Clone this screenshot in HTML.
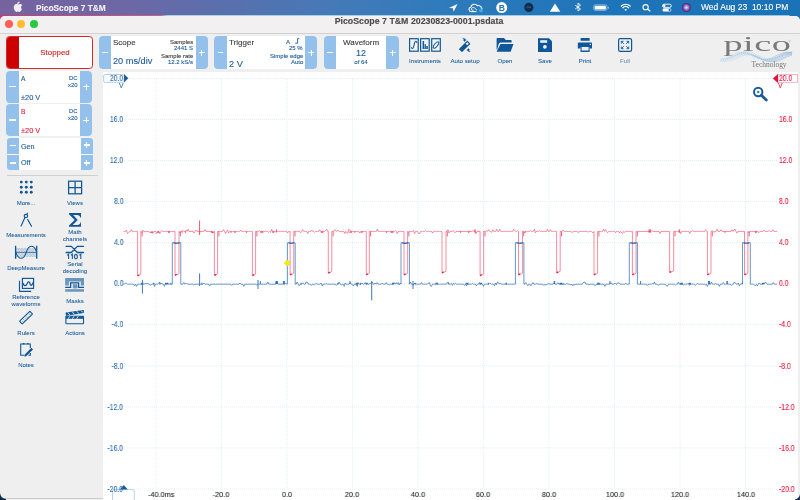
<!DOCTYPE html>
<html><head><meta charset="utf-8">
<style>
*{margin:0;padding:0;box-sizing:border-box}
html,body{width:800px;height:500px;overflow:hidden;background:#142c57;font-family:"Liberation Sans",sans-serif}
.t{position:absolute;white-space:nowrap;will-change:transform;-webkit-text-stroke:0.12px currentColor}
svg{will-change:transform}
.a{position:absolute}
.btn{position:absolute;background:#93c1eb}
.pm{position:absolute;color:#fff;font-size:13px;line-height:13px;font-weight:normal;text-align:center;width:12px}
</style></head><body>
<div class="a" style="left:0;top:0;width:800px;height:20px;background:linear-gradient(90deg,#c73a70 0%,#d05a80 20%,#a8d4e6 21%,#8fc8e0 98.6%,#1b72b6 98.8%)"></div>
<div class="a" style="left:0;top:0;width:800px;height:14.8px;background:linear-gradient(90deg,#75639f 0%,#6c68a5 16%,#5870ae 29%,#4779b7 41%,#2f7bbb 55%,#1e74b8 75%,#1b72b6 100%)"></div>
<div class="a" style="left:0;top:15.5px;width:800px;height:484.5px;background:#efefef;border-radius:5px 5px 0 0;overflow:hidden">
<div class="a" style="left:0;top:0;width:800px;height:17.2px;background:#f3f0f1"></div>
<div class="a" style="left:0;top:17.2px;width:800px;height:1px;background:#d3d0d2"></div>
</div>
<div class="a" style="left:5px;top:498px;width:98px;height:1px;background:#cdcdcd"></div>
<div class="a" style="left:4.80px;top:20.20px;width:7.8px;height:7.8px;border-radius:50%;background:#fe5f57"></div>
<div class="a" style="left:17.10px;top:20.20px;width:7.8px;height:7.8px;border-radius:50%;background:#febc2e"></div>
<div class="a" style="left:29.80px;top:20.20px;width:7.8px;height:7.8px;border-radius:50%;background:#28c840"></div>
<div class="t" style="left:36px;top:3.60px;font-size:8.3px;line-height:8.3px;color:#f4f1f8;font-weight:bold;">PicoScope 7 T&amp;M</div>
<div class="t" style="right:11.700000000000045px;top:2.85px;font-size:8.5px;line-height:8.5px;color:#ffffff;font-weight:normal;">Wed Aug 23&nbsp; 10:10 PM</div>
<svg class="a" style="left:13px;top:0.9px" width="10" height="11" viewBox="0 0 10 11"><path fill="#f2eff7" d="M6.6,0.4 C6.7,1.2 6.3,2 5.8,2.5 C5.3,3 4.7,3.2 4.2,3.2 C4.1,2.4 4.5,1.6 5,1.1 C5.4,0.7 6.1,0.4 6.6,0.4 Z M8.9,8.2 C8.6,8.9 8.4,9.3 8,9.8 C7.5,10.5 6.9,10.9 6.3,10.9 C5.8,10.9 5.6,10.6 4.9,10.6 C4.2,10.6 3.9,10.9 3.4,10.9 C2.8,10.9 2.3,10.3 1.8,9.6 C0.6,7.9 0.4,5.7 1.3,4.4 C1.9,3.5 2.8,3.1 3.6,3.1 C4.4,3.1 4.9,3.5 5.5,3.5 C6.1,3.5 6.5,3.1 7.4,3.1 C8.1,3.1 8.8,3.5 9.3,4.1 C7.6,5 7.9,7.5 8.9,8.2 Z"/></svg>
<svg class="a" style="left:440px;top:0" width="360" height="15" viewBox="440 0 360 15">
<path fill="#fff" d="M457.5,4 L449,8 L453,8.3 L453.6,11.8 Z"/>
<path d="M471.2,11.6 C468.6,11.6 468.2,7.6 470.8,7.2 C471,4.2 475.6,3.2 477.3,5.6 C480.6,5 482.6,8.2 481.6,10.4" fill="none" stroke="#fff" stroke-width="1.1"/>
<path d="M471.2,11.6 L476.5,11.6" stroke="#fff" stroke-width="1.1"/>
<path d="M473.6,10.2 C472.2,10.8 470.8,9.6 471.6,8.3 C472.5,7 474.5,7.5 475.3,8.6 L477,10.2" fill="none" stroke="#fff" stroke-width="0.9"/>
<circle cx="481" cy="10.6" r="2" fill="#3aa8ec"/>
<circle cx="501.7" cy="7.6" r="5.5" fill="#fff"/>
<text x="501.8" y="10.7" font-family="Liberation Sans" font-weight="bold" font-size="8.6" fill="#2a74b5" text-anchor="middle">B</text>
<circle cx="528.8" cy="7.4" r="4.6" fill="#0f2e4e"/>
<path d="M526.5,7.6 L528,6.8 L529.5,7.4 L531,6.9" stroke="#6c8aa8" stroke-width="0.6" fill="none"/>
<path fill="#fff" d="M555,3.4 L560.3,11.8 L549.8,11.8 Z"/>
<path fill="none" stroke="#fff" stroke-width="0.9" d="M575.2,5.2 L580.5,9 L578,11 L578,3 L580.5,5.2 L575.2,9"/>
<rect x="593.5" y="4.8" width="13.5" height="5.6" rx="1.8" fill="none" stroke="#fff" stroke-opacity="0.55" stroke-width="0.8"/>
<rect x="594.6" y="5.8" width="11.3" height="3.6" rx="0.9" fill="#fff"/>
<path d="M607.8,6.5 L608.8,7 L608.8,8.4 L607.8,8.9" fill="#fff" fill-opacity="0.55"/>
<g fill="none" stroke="#fff" stroke-width="1.2" stroke-linecap="round"><path d="M621.3,6 A6.5,6.5 0 0 1 630.2,6"/><path d="M622.9,7.8 A4.2,4.2 0 0 1 628.6,7.8"/></g>
<path fill="#fff" d="M624.4,9.5 A2,2 0 0 1 627.1,9.5 L625.75,11.1 Z"/>
<circle cx="645.6" cy="7.2" r="2.6" fill="none" stroke="#fff" stroke-width="1.1"/>
<path d="M647.5,9.1 L650.3,11.2" stroke="#fff" stroke-width="1.2"/>
<rect x="662.5" y="4.2" width="8.8" height="3.2" rx="1.6" fill="none" stroke="#fff" stroke-width="0.9"/>
<circle cx="664.2" cy="5.8" r="1.2" fill="#fff"/>
<rect x="662.5" y="8.3" width="8.8" height="3.3" rx="1.6" fill="#fff"/>
<circle cx="669.6" cy="9.95" r="1.1" fill="#1a70b6"/>
<defs><radialGradient id="siri" cx="50%" cy="50%" r="50%"><stop offset="0" stop-color="#f4f0ff"/><stop offset="0.3" stop-color="#8ab8f0"/><stop offset="0.6" stop-color="#b050b8"/><stop offset="1" stop-color="#33285e"/></radialGradient></defs>
<circle cx="686.4" cy="7.5" r="4.5" fill="url(#siri)"/>

</svg>
<div class="t" style="left:319.1px;width:200px;text-align:center;top:16.95px;font-size:8.8px;line-height:8.8px;color:#4a4a4a;font-weight:bold;">PicoScope 7 T&amp;M 20230823-0001.psdata</div>
<div class="a" style="left:6px;top:36px;width:86.7px;height:32.6px;border:1px solid #d42a2a;border-radius:3.5px;background:#fff;overflow:hidden"><div class="a" style="left:0;top:0;width:11.8px;height:31px;background:#cc0000"></div></div>
<div class="t" style="left:-44.8px;width:200px;text-align:center;top:48.64px;font-size:7.9px;line-height:7.9px;color:#cc1f1f;font-weight:normal;">Stopped</div>
<div class="a" style="left:6px;top:71px;width:86.4px;height:32px;border-radius:4px;background:#fff;overflow:hidden"><div class="a" style="left:0;top:0;width:13px;height:32px;background:#93c1eb"></div><div class="a" style="right:0;top:0;width:12.4px;height:32px;background:#93c1eb"></div></div>
<div class="a" style="left:9.20px;top:86.00px;width:6.6px;height:1.4px;background:#fff"></div>
<div class="a" style="left:83.05px;top:86.17px;width:6.3px;height:1.25px;background:#fff"></div>
<div class="a" style="left:85.58px;top:83.65px;width:1.25px;height:6.3px;background:#fff"></div>
<div class="t" style="left:20.8px;top:75.98px;font-size:6.6px;line-height:6.6px;color:#1c5b99;font-weight:normal;">A</div>
<div class="t" style="right:722.2px;top:76.02px;font-size:5.9px;line-height:5.9px;color:#1c5b99;font-weight:normal;">DC</div>
<div class="t" style="right:722.2px;top:83.02px;font-size:5.9px;line-height:5.9px;color:#1c5b99;font-weight:normal;">x20</div>
<div class="t" style="left:21px;top:93.79px;font-size:7.4px;line-height:7.4px;color:#1c5b99;font-weight:normal;">±20 V</div>
<div class="a" style="left:6px;top:104.3px;width:86.4px;height:31.8px;border-radius:4px;background:#fff;overflow:hidden"><div class="a" style="left:0;top:0;width:13px;height:31.8px;background:#93c1eb"></div><div class="a" style="right:0;top:0;width:12.4px;height:31.8px;background:#93c1eb"></div></div>
<div class="a" style="left:9.20px;top:119.40px;width:6.6px;height:1.4px;background:#fff"></div>
<div class="a" style="left:83.05px;top:119.58px;width:6.3px;height:1.25px;background:#fff"></div>
<div class="a" style="left:85.58px;top:117.05px;width:1.25px;height:6.3px;background:#fff"></div>
<div class="t" style="left:20.8px;top:109.18px;font-size:6.6px;line-height:6.6px;color:#e01a3c;font-weight:normal;">B</div>
<div class="t" style="right:722.2px;top:109.12px;font-size:5.9px;line-height:5.9px;color:#1c5b99;font-weight:normal;">DC</div>
<div class="t" style="right:722.2px;top:116.02px;font-size:5.9px;line-height:5.9px;color:#1c5b99;font-weight:normal;">x20</div>
<div class="t" style="left:21px;top:126.79px;font-size:7.4px;line-height:7.4px;color:#e01a3c;font-weight:normal;">±20 V</div>
<div class="a" style="left:7px;top:138px;width:85.8px;height:31.7px;border-radius:3px;background:#fff;overflow:hidden"><div class="a" style="left:0;top:0;width:12px;height:15.8px;background:#93c1eb"></div><div class="a" style="right:0;top:0;width:11.8px;height:15.8px;background:#93c1eb"></div><div class="a" style="left:0;top:17px;width:12px;height:15px;background:#93c1eb"></div><div class="a" style="right:0;top:17px;width:11.8px;height:15px;background:#93c1eb"></div></div>
<div class="a" style="left:10.10px;top:144.50px;width:6px;height:1.4px;background:#fff"></div>
<div class="a" style="left:83.80px;top:144.45px;width:6px;height:1.3px;background:#fff"></div>
<div class="a" style="left:86.15px;top:142.10px;width:1.3px;height:6px;background:#fff"></div>
<div class="t" style="left:20.8px;top:143.38px;font-size:7.2px;line-height:7.2px;color:#1c5b99;font-weight:normal;">Gen</div>
<div class="a" style="left:10.10px;top:162.30px;width:6px;height:1.4px;background:#fff"></div>
<div class="a" style="left:83.80px;top:162.35px;width:6px;height:1.3px;background:#fff"></div>
<div class="a" style="left:86.15px;top:160.00px;width:1.3px;height:6px;background:#fff"></div>
<div class="t" style="left:20.8px;top:159.38px;font-size:7.2px;line-height:7.2px;color:#1c5b99;font-weight:normal;">Off</div>
<div class="a" style="left:7px;top:175px;width:91px;height:0.8px;background:#cfcfcf"></div>
<div class="a" style="left:99px;top:36px;width:108.7px;height:32.7px;border-radius:4px;background:#fff;overflow:hidden"><div class="a" style="left:0;top:0;width:11.7px;height:32.7px;background:#93c1eb"></div><div class="a" style="right:0;top:0;width:12px;height:32.7px;background:#93c1eb"></div></div>
<div class="a" style="left:102.25px;top:51.90px;width:5.5px;height:1.2px;background:#fff"></div>
<div class="a" style="left:198.70px;top:51.90px;width:6px;height:1.2px;background:#fff"></div>
<div class="a" style="left:201.10px;top:49.50px;width:1.2px;height:6px;background:#fff"></div>
<div class="t" style="left:112.9px;top:39.39px;font-size:8.0px;line-height:8.0px;color:#3c3c3c;font-weight:normal;">Scope</div>
<div class="t" style="left:113.1px;top:56.91px;font-size:9.2px;line-height:9.2px;color:#1c5b99;font-weight:normal;">20 ms/div</div>
<div class="t" style="right:606.7px;top:38.77px;font-size:6.0px;line-height:6.0px;color:#3c3c3c;font-weight:normal;">Samples</div>
<div class="t" style="right:606.7px;top:45.27px;font-size:6.0px;line-height:6.0px;color:#1c5b99;font-weight:normal;">2441 S</div>
<div class="t" style="right:606.7px;top:52.57px;font-size:6.0px;line-height:6.0px;color:#3c3c3c;font-weight:normal;">Sample rate</div>
<div class="t" style="right:606.7px;top:59.27px;font-size:6.0px;line-height:6.0px;color:#1c5b99;font-weight:normal;">12.2 kS/s</div>
<div class="a" style="left:214.3px;top:36px;width:102.8px;height:32.7px;border-radius:4px;background:#fff;overflow:hidden"><div class="a" style="left:0;top:0;width:12.4px;height:32.7px;background:#93c1eb"></div><div class="a" style="right:0;top:0;width:12px;height:32.7px;background:#93c1eb"></div></div>
<div class="a" style="left:217.75px;top:51.90px;width:5.5px;height:1.2px;background:#fff"></div>
<div class="a" style="left:308.20px;top:51.90px;width:6px;height:1.2px;background:#fff"></div>
<div class="a" style="left:310.60px;top:49.50px;width:1.2px;height:6px;background:#fff"></div>
<div class="t" style="left:229px;top:38.99px;font-size:8.0px;line-height:8.0px;color:#3c3c3c;font-weight:normal;">Trigger</div>
<div class="t" style="left:228.8px;top:59.61px;font-size:9.2px;line-height:9.2px;color:#1c5b99;font-weight:normal;">2 V</div>
<div class="t" style="right:509.6px;top:38.87px;font-size:6.0px;line-height:6.0px;color:#1c5b99;font-weight:normal;">A</div>
<svg class="a" style="left:294px;top:37px" width="10" height="8" viewBox="294 37 10 8"><path d="M295.2,43.2 L297.6,43.2 L297.6,38.7 L299.3,38.7" fill="none" stroke="#2a6aaa" stroke-width="1"/></svg>
<div class="t" style="right:497.2px;top:45.37px;font-size:6.0px;line-height:6.0px;color:#1c5b99;font-weight:normal;">25 %</div>
<div class="t" style="right:496.5px;top:52.57px;font-size:6.0px;line-height:6.0px;color:#1c5b99;font-weight:normal;">Simple edge</div>
<div class="t" style="right:496.5px;top:59.27px;font-size:6.0px;line-height:6.0px;color:#1c5b99;font-weight:normal;">Auto</div>
<div class="a" style="left:324.3px;top:36px;width:74.4px;height:32.7px;border-radius:4px;background:#fff;overflow:hidden"><div class="a" style="left:0;top:0;width:11.7px;height:32.7px;background:#93c1eb"></div><div class="a" style="right:0;top:0;width:12.5px;height:32.7px;background:#93c1eb"></div></div>
<div class="a" style="left:327.45px;top:51.90px;width:5.5px;height:1.2px;background:#fff"></div>
<div class="a" style="left:389.50px;top:51.90px;width:6px;height:1.2px;background:#fff"></div>
<div class="a" style="left:391.90px;top:49.50px;width:1.2px;height:6px;background:#fff"></div>
<div class="t" style="left:261.2px;width:200px;text-align:center;top:39.29px;font-size:8.0px;line-height:8.0px;color:#3c3c3c;font-weight:normal;">Waveform</div>
<div class="t" style="left:261.2px;width:200px;text-align:center;top:48.90px;font-size:9.0px;line-height:9.0px;color:#1c5b99;font-weight:normal;">12</div>
<div class="t" style="left:261.2px;width:200px;text-align:center;top:59.27px;font-size:6.0px;line-height:6.0px;color:#1c5b99;font-weight:normal;">of 64</div>
<svg class="a" style="left:400px;top:30px" width="250" height="30" viewBox="400 30 250 30">
<g fill="#f6f3f1" stroke="#0f5798" stroke-width="1.2">
<rect x="409.6" y="38.7" width="8.6" height="12.5"/><rect x="420.6" y="38.7" width="8.6" height="12.5"/><rect x="431.7" y="38.7" width="8.6" height="12.5"/>
</g>
<g fill="none" stroke="#0f5798" stroke-width="1.05" stroke-linecap="round">
<path d="M411.6,47.6 C411.9,49 412.9,48.9 413.4,47.4 L414.6,43 C415.2,40.8 416.4,40.9 416.8,42.6"/>
<ellipse cx="436" cy="45" rx="3.9" ry="1.6" transform="rotate(-52 436 45)"/>
</g>
<g fill="#0f5798"><rect x="422.6" y="41" width="1.5" height="7.8"/><rect x="424.6" y="44.2" width="1.3" height="4.6"/><rect x="426.3" y="46" width="1.5" height="2.8"/><rect x="422.4" y="48.2" width="5.6" height="0.8" opacity="0.6"/></g>
<g transform="rotate(-45 464.6 46.4)">
<rect x="458.6" y="44.2" width="12" height="4.4" rx="0.6" fill="#0f5798"/>
<rect x="467.2" y="45.3" width="2.3" height="2.2" fill="#efefef"/>
</g>
<g fill="#0f5798">
<path d="M464.7,38.1 L465.365,39.335 L466.59999999999997,40.0 L465.365,40.665 L464.7,41.9 L464.03499999999997,40.665 L462.8,40.0 L464.03499999999997,39.335 Z"/><circle cx="463.2" cy="38.3" r="0.6"/><path d="M468.3,48.1 L468.96500000000003,49.335 L470.2,50.0 L468.96500000000003,50.665 L468.3,51.9 L467.635,50.665 L466.40000000000003,50.0 L467.635,49.335 Z"/><circle cx="469.8" cy="51.6" r="0.55"/>
</g>
<path fill="#0f5798" d="M496.6,38.5 Q496.6,38 497.1,38 L504,38 L505.8,40 L511,40 Q511.6,40 511.6,40.6 L511.6,42.4 L500.6,42.4 Q499.2,42.4 498.6,44.2 L497.2,49.6 L496.6,49.6 Z"/>
<path fill="#0f5798" d="M500.5,43.9 L513.5,43.9 L510.8,51.3 Q510.6,51.8 510,51.8 L497.2,51.8 Q496.6,51.8 496.8,51.2 Z"/>
<path fill="#0f5798" d="M538,38.2 L549,38.2 L552,41.2 L552,52 L538,52 Z"/>
<rect x="540.2" y="40.2" width="7" height="2.6" fill="#efefef"/>
<circle cx="544.9" cy="46.8" r="1.9" fill="#efefef"/>
<rect x="580.6" y="38" width="9" height="2.8" rx="0.5" fill="#0f5798"/>
<path fill="#0f5798" d="M578.6,42.4 L591.2,42.4 Q592,42.4 592,43.2 L592,48.6 L589.6,48.6 L589.6,47 L580.6,47 L580.6,48.6 L577.8,48.6 L577.8,43.2 Q577.8,42.4 578.6,42.4 Z"/>
<path fill="none" stroke="#0f5798" stroke-width="1" d="M581.1,47 L581.1,51.3 L589.1,51.3 L589.1,47"/>
<rect x="580.6" y="50.6" width="9" height="1.2" fill="#0f5798"/>
<circle cx="590.3" cy="44.4" r="0.65" fill="#fff"/>
<rect x="618.6" y="38.6" width="13" height="12.8" rx="1.6" fill="none" stroke="#0f5798" stroke-width="1.2"/>
<g stroke="#0f5798" stroke-width="0.9" fill="none"><path d="M621.5,41.5 L623.8,43.8 M621.3,43.5 L621.3,41.3 L623.5,41.3"/><path d="M628.5,41.5 L626.2,43.8 M628.7,43.5 L628.7,41.3 L626.5,41.3"/><path d="M621.5,48.5 L623.8,46.2 M621.3,46.5 L621.3,48.7 L623.5,48.7"/><path d="M628.5,48.5 L626.2,46.2 M628.7,46.5 L628.7,48.7 L626.5,48.7"/></g>
</svg>
<div class="t" style="left:325px;width:200px;text-align:center;top:57.52px;font-size:6.1px;line-height:6.1px;color:#0f5798;font-weight:normal;-webkit-text-stroke:0.05px currentColor;">Instruments</div>
<div class="t" style="left:365px;width:200px;text-align:center;top:57.52px;font-size:6.1px;line-height:6.1px;color:#0f5798;font-weight:normal;-webkit-text-stroke:0.05px currentColor;">Auto setup</div>
<div class="t" style="left:404.8px;width:200px;text-align:center;top:57.52px;font-size:6.1px;line-height:6.1px;color:#0f5798;font-weight:normal;-webkit-text-stroke:0.05px currentColor;">Open</div>
<div class="t" style="left:444.5px;width:200px;text-align:center;top:57.52px;font-size:6.1px;line-height:6.1px;color:#0f5798;font-weight:normal;-webkit-text-stroke:0.05px currentColor;">Save</div>
<div class="t" style="left:485.20000000000005px;width:200px;text-align:center;top:57.52px;font-size:6.1px;line-height:6.1px;color:#0f5798;font-weight:normal;-webkit-text-stroke:0.05px currentColor;">Print</div>
<div class="t" style="left:525px;width:200px;text-align:center;top:57.52px;font-size:6.1px;line-height:6.1px;color:#6b8fb5;font-weight:normal;-webkit-text-stroke:0.05px currentColor;">Full</div>
<svg class="a" style="left:715px;top:33px" width="85" height="38" viewBox="715 33 85 38">
<text transform="translate(723.4,51) scale(1.74,1)" font-family="Liberation Serif" font-size="22" fill="#7a7a7a" letter-spacing="0.3">pico</text>
<circle cx="789.6" cy="41" r="0.9" fill="none" stroke="#999" stroke-width="0.35"/>
<defs><linearGradient id="wg" x1="0" x2="1" y1="0" y2="0"><stop offset="0" stop-color="#dbe9f5"/><stop offset="0.5" stop-color="#a9cae6"/><stop offset="1" stop-color="#78a7d2"/></linearGradient></defs>
<g fill="none" stroke="url(#wg)" stroke-width="0.45">
<polyline points="720,59.15 721,58.96 722,58.72 723,58.42 724,58.07 725,57.69 726,57.27 727,56.82 728,56.35 729,55.87 730,55.39 731,54.92 732,54.46 733,54.02 734,53.61 735,53.25 736,52.92 737,52.65 738,52.44 739,52.28 740,52.18 741,52.15 742,52.18 743,52.28 744,52.44 745,52.65 746,52.92 747,53.25 748,53.61 749,54.02 750,54.46 751,54.92 752,55.39 753,55.87 754,56.35 755,56.82 756,57.27 757,57.69 758,58.07 759,58.42 760,58.72 761,58.96 762,59.15 763,59.28 764,59.34 765,59.34 766,59.28 767,59.15 768,58.96 769,58.72 770,58.42 771,58.07 772,57.69 773,57.27 774,56.82 775,56.35 776,55.87 777,55.39 778,54.92 779,54.46 780,54.02 781,53.61 782,53.25 783,52.92 784,52.65 785,52.44 786,52.28 787,52.18 788,52.15 789,52.18 790,52.28 791,52.44 792,52.65"/>
<polyline points="720,59.82 721,59.73 722,59.58 723,59.37 724,59.10 725,58.79 726,58.42 727,58.02 728,57.59 729,57.13 730,56.66 731,56.18 732,55.70 733,55.23 734,54.78 735,54.35 736,53.96 737,53.61 738,53.31 739,53.06 740,52.87 741,52.73 742,52.66 743,52.66 744,52.71 745,52.83 746,53.02 747,53.26 748,53.55 749,53.89 750,54.27 751,54.69 752,55.14 753,55.60 754,56.08 755,56.56 756,57.04 757,57.50 758,57.94 759,58.35 760,58.72 761,59.05 762,59.32 763,59.55 764,59.71 765,59.81 766,59.85 767,59.82 768,59.73 769,59.58 770,59.37 771,59.10 772,58.79 773,58.42 774,58.02 775,57.59 776,57.13 777,56.66 778,56.18 779,55.70 780,55.23 781,54.78 782,54.35 783,53.96 784,53.61 785,53.31 786,53.06 787,52.87 788,52.73 789,52.66 790,52.66 791,52.71 792,52.83"/>
<polyline points="720,60.33 721,60.35 722,60.30 723,60.18 724,60.01 725,59.77 726,59.48 727,59.15 728,58.77 729,58.35 730,57.91 731,57.44 732,56.97 733,56.49 734,56.01 735,55.55 736,55.10 737,54.69 738,54.32 739,53.99 740,53.70 741,53.47 742,53.30 743,53.20 744,53.15 745,53.17 746,53.25 747,53.40 748,53.60 749,53.87 750,54.18 751,54.54 752,54.94 753,55.37 754,55.82 755,56.29 756,56.77 757,57.25 758,57.72 759,58.18 760,58.61 761,59.00 762,59.35 763,59.66 764,59.92 765,60.12 766,60.26 767,60.33 768,60.35 769,60.30 770,60.18 771,60.01 772,59.77 773,59.48 774,59.15 775,58.77 776,58.35 777,57.91 778,57.44 779,56.97 780,56.49 781,56.01 782,55.55 783,55.10 784,54.69 785,54.32 786,53.99 787,53.70 788,53.47 789,53.30 790,53.20 791,53.15 792,53.17"/>
<polyline points="720,60.68 721,60.80 722,60.85 723,60.83 724,60.76 725,60.62 726,60.42 727,60.16 728,59.85 729,59.50 730,59.11 731,58.68 732,58.22 733,57.75 734,57.27 735,56.79 736,56.32 737,55.87 738,55.44 739,55.04 740,54.68 741,54.37 742,54.10 743,53.90 744,53.75 745,53.67 746,53.65 747,53.70 748,53.80 749,53.97 750,54.20 751,54.49 752,54.82 753,55.19 754,55.60 755,56.05 756,56.51 757,56.99 758,57.47 759,57.94 760,58.41 761,58.85 762,59.27 763,59.65 764,59.98 765,60.27 766,60.51 767,60.68 768,60.80 769,60.85 770,60.83 771,60.76 772,60.62 773,60.42 774,60.16 775,59.85 776,59.50 777,59.11 778,58.68 779,58.22 780,57.75 781,57.27 782,56.79 783,56.32 784,55.87 785,55.44 786,55.04 787,54.68 788,54.37 789,54.10 790,53.90 791,53.75 792,53.67"/>
<polyline points="720,60.87 721,61.08 722,61.23 723,61.32 724,61.35 725,61.31 726,61.21 727,61.05 728,60.82 729,60.55 730,60.22 731,59.85 732,59.44 733,59.00 734,58.54 735,58.06 736,57.58 737,57.10 738,56.64 739,56.19 740,55.77 741,55.39 742,55.05 743,54.76 744,54.52 745,54.33 746,54.21 747,54.16 748,54.16 749,54.23 750,54.37 751,54.56 752,54.81 753,55.11 754,55.46 755,55.85 756,56.28 757,56.73 758,57.20 759,57.68 760,58.16 761,58.63 762,59.09 763,59.52 764,59.92 765,60.29 766,60.60 767,60.87 768,61.08 769,61.23 770,61.32 771,61.35 772,61.31 773,61.21 774,61.05 775,60.82 776,60.55 777,60.22 778,59.85 779,59.44 780,59.00 781,58.54 782,58.06 783,57.58 784,57.10 785,56.64 786,56.19 787,55.77 788,55.39 789,55.05 790,54.76 791,54.52 792,54.33"/>
<polyline points="720,60.92 721,61.22 722,61.46 723,61.65 724,61.78 725,61.84 726,61.84 727,61.78 728,61.65 729,61.46 730,61.22 731,60.92 732,60.57 733,60.19 734,59.77 735,59.32 736,58.85 737,58.37 738,57.89 739,57.42 740,56.96 741,56.52 742,56.11 743,55.75 744,55.42 745,55.15 746,54.94 747,54.78 748,54.68 749,54.65 750,54.68 751,54.78 752,54.94 753,55.15 754,55.42 755,55.75 756,56.11 757,56.52 758,56.96 759,57.42 760,57.89 761,58.37 762,58.85 763,59.32 764,59.77 765,60.19 766,60.57 767,60.92 768,61.22 769,61.46 770,61.65 771,61.78 772,61.84 773,61.84 774,61.78 775,61.65 776,61.46 777,61.22 778,60.92 779,60.57 780,60.19 781,59.77 782,59.32 783,58.85 784,58.37 785,57.89 786,57.42 787,56.96 788,56.52 789,56.11 790,55.75 791,55.42 792,55.15"/>
</g>
<g stroke="url(#wg)" stroke-width="0.4">
<path d="M719.8,62.79 L722.2,58.39"/>
<path d="M721.8,62.73 L724.2,58.33"/>
<path d="M723.8,62.41 L726.2,58.01"/>
<path d="M725.8,61.87 L728.2,57.47"/>
<path d="M727.8,61.14 L730.2,56.74"/>
<path d="M729.8,60.27 L732.2,55.87"/>
<path d="M731.8,59.32 L734.2,54.92"/>
<path d="M733.8,58.37 L736.2,53.97"/>
<path d="M735.8,57.47 L738.2,53.07"/>
<path d="M737.8,56.70 L740.2,52.30"/>
<path d="M739.8,56.10 L742.2,51.70"/>
<path d="M741.8,55.73 L744.2,51.33"/>
<path d="M743.8,55.60 L746.2,51.20"/>
<path d="M745.8,55.73 L748.2,51.33"/>
<path d="M747.8,56.10 L750.2,51.70"/>
<path d="M749.8,56.70 L752.2,52.30"/>
<path d="M751.8,57.47 L754.2,53.07"/>
<path d="M753.8,58.37 L756.2,53.97"/>
<path d="M755.8,59.32 L758.2,54.92"/>
<path d="M757.8,60.27 L760.2,55.87"/>
<path d="M759.8,61.14 L762.2,56.74"/>
<path d="M761.8,61.87 L764.2,57.47"/>
<path d="M763.8,62.41 L766.2,58.01"/>
<path d="M765.8,62.73 L768.2,58.33"/>
<path d="M767.8,62.79 L770.2,58.39"/>
<path d="M769.8,62.60 L772.2,58.20"/>
<path d="M771.8,62.17 L774.2,57.77"/>
<path d="M773.8,61.52 L776.2,57.12"/>
<path d="M775.8,60.72 L778.2,56.32"/>
<path d="M777.8,59.80 L780.2,55.40"/>
<path d="M779.8,58.84 L782.2,54.44"/>
<path d="M781.8,57.91 L784.2,53.51"/>
<path d="M783.8,57.06 L786.2,52.66"/>
<path d="M785.8,56.37 L788.2,51.97"/>
<path d="M787.8,55.89 L790.2,51.49"/>
<path d="M789.8,55.63 L792.2,51.23"/>
</g>
<text transform="translate(751.6,67.3) scale(1.02,1)" font-family="Liberation Serif" font-size="7.3" fill="#747474">Technology</text>
</svg>
<svg class="a" style="left:0;top:176px" width="100" height="190" viewBox="0 176 100 190"><g fill="#0f5798"><circle cx="21.3" cy="182.1" r="1.45"/><circle cx="26.3" cy="182.1" r="1.45"/><circle cx="31.3" cy="182.1" r="1.45"/><circle cx="21.3" cy="187.2" r="1.45"/><circle cx="26.3" cy="187.2" r="1.45"/><circle cx="31.3" cy="187.2" r="1.45"/><circle cx="21.3" cy="192.2" r="1.45"/><circle cx="26.3" cy="192.2" r="1.45"/><circle cx="31.3" cy="192.2" r="1.45"/></g><g fill="none" stroke="#0f5798" stroke-width="1.25"><rect x="68.6" y="181.2" width="13" height="12.6"/><path d="M75.1,181.2 L75.1,193.8 M68.6,187.5 L81.6,187.5"/></g>
<g fill="none" stroke="#0f5798" stroke-width="1.15" stroke-linecap="round"><circle cx="25.9" cy="216" r="1.7"/><path d="M27,214.2 L27.4,213.2 M24.9,217.6 L21.1,226 M27.8,219.6 L31.5,226.3"/></g>
<path fill="#0f5798" d="M69,213 H81 V217.6 H80.3 Q80,215.1 77,215.1 H73.2 L77.7,220 L72.7,225 H77.5 Q80.2,225 80.5,222.3 H81 V226.8 H69 V225.6 L74.7,220 L69,214.3 Z"/>
<defs><pattern id="hatch" width="1.6" height="1.6" patternUnits="userSpaceOnUse"><rect width="0.8" height="0.8" fill="#0f5798" opacity="0.45"/><rect x="0.8" y="0.8" width="0.8" height="0.8" fill="#0f5798" opacity="0.45"/></pattern></defs>
<rect x="16" y="248" width="20.5" height="9" fill="url(#hatch)" opacity="0.8"/>
<g fill="none" stroke="#0f5798">
<path d="M15.6,245.7 L15.6,258.8 M36.7,245.7 L36.7,258.8" stroke-width="1.3"/>
<path d="M15.6,252.4 L36.7,252.4" stroke-width="0.7"/>
<path d="M15.8,252.4 C18.5,260.3 23.8,260.3 26.2,252.4 C28.6,244.4 34,244.4 36.5,251.5" stroke-width="1.1"/>
</g>
<g fill="none" stroke="#0f5798" stroke-width="1.3" stroke-linecap="round"><path d="M66.1,246.4 L71.3,246.4 L77.4,252.5 L83.5,252.5 M66.1,252.5 L71.3,252.5 L77.4,246.4 L83.5,246.4"/></g>
<g fill="none" stroke="#0f5798" stroke-width="1.2" opacity="0.9"><path d="M67.2,255.2 L68.6,254.2 L68.6,258.9 M71,255.2 L72.4,254.2 L72.4,258.9 M79.4,255.2 L80.8,254.2 L80.8,258.9"/><ellipse cx="75.9" cy="256.55" rx="1.45" ry="2.2"/></g>
<g fill="none" stroke="#0f5798" stroke-width="1.15"><path d="M19.5,280.8 L19.5,291.4 L31.2,291.4"/><rect x="22.4" y="278.4" width="11.2" height="10"/><path d="M23,283 C24,286.5 26,286.5 27.2,283.5 C28.2,280.8 29.5,281.5 30.2,284 C31,286.5 32.6,285 33.4,281.8" stroke-width="1.25"/></g>
<g fill="#0f5798" opacity="0.6"><path d="M65.2,278 L84,278 L84,285.6 L80.8,285.6 L80.8,281.6 L68.8,281.6 L68.8,285.6 L65.2,285.6 Z"/><rect x="72.8" y="284.2" width="4.6" height="4.2"/><rect x="65.2" y="289.2" width="18.8" height="2.5"/></g>
<path d="M65.2,287.4 L70.6,287.4 L70.6,282.8 L78.6,282.8 L78.6,287.4 L84,287.4" fill="none" stroke="#0f5798" stroke-width="1.3"/>
<g transform="rotate(-44 26 317.6)"><rect x="18.8" y="315.7" width="14.4" height="3.9" rx="0.5" fill="none" stroke="#0f5798" stroke-width="1.1"/><path d="M21,318.9 L21,317.9 M23,318.9 L23,317.2 M25,318.9 L25,317.9 M27,318.9 L27,317.2 M29,318.9 L29,317.9 M31,318.9 L31,317.2" stroke="#0f5798" stroke-width="0.6"/></g>
<path d="M65.6,312.6 L83.4,310.1 Q83.9,310 83.9,310.6 L83.9,313.1 L65.9,315.7 Z" fill="#0f5798"/>
<path d="M67.8,312.4 L69.8,314.9 M72.3,311.8 L74.3,314.3 M76.8,311.2 L78.8,313.7 M81.3,310.6 L82.6,312.4" stroke="#efefef" stroke-width="0.9"/>
<rect x="65.9" y="316.3" width="17.6" height="7.5" rx="0.5" fill="none" stroke="#0f5798" stroke-width="1.1"/>
<rect x="65.9" y="316.3" width="17.6" height="2.5" fill="#0f5798"/>
<path d="M68.2,318.8 L69.8,316.3 M72.4,318.8 L74,316.3 M76.6,318.8 L78.2,316.3" stroke="#efefef" stroke-width="0.9"/>
<g fill="none" stroke="#0f5798" stroke-width="1.1"><path d="M30.3,348 L30.3,344 L20.7,344 L20.7,355.2 L24,355.2 M28.5,355.2 L30.3,355.2 L30.3,353"/></g>
<g fill="#0f5798"><ellipse cx="23.6" cy="343.8" rx="1" ry="0.7"/><ellipse cx="27.9" cy="343.8" rx="1" ry="0.7"/></g>
<path d="M24.6,354.8 L31.4,347.8 L33,349.5 L26.2,356.3 L24.2,356.6 Z" fill="#0f5798"/>
</svg>
<div class="t" style="left:-73.7px;width:200px;text-align:center;top:199.87px;font-size:6.0px;line-height:6.0px;color:#0f5798;font-weight:normal;-webkit-text-stroke:0.05px currentColor;">More...</div>
<div class="t" style="left:-25.5px;width:200px;text-align:center;top:199.87px;font-size:6.0px;line-height:6.0px;color:#0f5798;font-weight:normal;-webkit-text-stroke:0.05px currentColor;">Views</div>
<div class="t" style="left:-73.7px;width:200px;text-align:center;top:232.47px;font-size:6.0px;line-height:6.0px;color:#0f5798;font-weight:normal;-webkit-text-stroke:0.05px currentColor;">Measurements</div>
<div class="t" style="left:-25.5px;width:200px;text-align:center;top:228.67px;font-size:6.0px;line-height:6.0px;color:#0f5798;font-weight:normal;-webkit-text-stroke:0.05px currentColor;">Math</div>
<div class="t" style="left:-25.5px;width:200px;text-align:center;top:235.57px;font-size:6.0px;line-height:6.0px;color:#0f5798;font-weight:normal;-webkit-text-stroke:0.05px currentColor;">channels</div>
<div class="t" style="left:-73.7px;width:200px;text-align:center;top:265.07px;font-size:6.0px;line-height:6.0px;color:#0f5798;font-weight:normal;-webkit-text-stroke:0.05px currentColor;">DeepMeasure</div>
<div class="t" style="left:-25.5px;width:200px;text-align:center;top:261.07px;font-size:6.0px;line-height:6.0px;color:#0f5798;font-weight:normal;-webkit-text-stroke:0.05px currentColor;">Serial</div>
<div class="t" style="left:-25.5px;width:200px;text-align:center;top:267.67px;font-size:6.0px;line-height:6.0px;color:#0f5798;font-weight:normal;-webkit-text-stroke:0.05px currentColor;">decoding</div>
<div class="t" style="left:-73.7px;width:200px;text-align:center;top:293.97px;font-size:6.0px;line-height:6.0px;color:#0f5798;font-weight:normal;-webkit-text-stroke:0.05px currentColor;">Reference</div>
<div class="t" style="left:-73.7px;width:200px;text-align:center;top:300.57px;font-size:6.0px;line-height:6.0px;color:#0f5798;font-weight:normal;-webkit-text-stroke:0.05px currentColor;">waveforms</div>
<div class="t" style="left:-25.5px;width:200px;text-align:center;top:297.67px;font-size:6.0px;line-height:6.0px;color:#0f5798;font-weight:normal;-webkit-text-stroke:0.05px currentColor;">Masks</div>
<div class="t" style="left:-73.7px;width:200px;text-align:center;top:330.07px;font-size:6.0px;line-height:6.0px;color:#0f5798;font-weight:normal;-webkit-text-stroke:0.05px currentColor;">Rulers</div>
<div class="t" style="left:-25.200000000000003px;width:200px;text-align:center;top:330.07px;font-size:6.0px;line-height:6.0px;color:#0f5798;font-weight:normal;-webkit-text-stroke:0.05px currentColor;">Actions</div>
<div class="t" style="left:-73.7px;width:200px;text-align:center;top:362.07px;font-size:6.0px;line-height:6.0px;color:#0f5798;font-weight:normal;-webkit-text-stroke:0.05px currentColor;">Notes</div>
<div class="a" style="left:102.8px;top:72px;width:695.2px;height:428px;background:#fff"></div>
<svg class="a" style="left:0;top:0" width="800" height="500" viewBox="0 0 800 500">
<path d="M124,78.5 L777,78.5" stroke="#e1f0f4" stroke-width="1" stroke-dasharray="1,1"/>
<path d="M124,119.6 L777,119.6" stroke="#e1f0f4" stroke-width="1" stroke-dasharray="1,1"/>
<path d="M124,160.6 L777,160.6" stroke="#e1f0f4" stroke-width="1" stroke-dasharray="1,1"/>
<path d="M124,201.7 L777,201.7" stroke="#e1f0f4" stroke-width="1" stroke-dasharray="1,1"/>
<path d="M124,242.7 L777,242.7" stroke="#e1f0f4" stroke-width="1" stroke-dasharray="1,1"/>
<path d="M124,283.8 L777,283.8" stroke="#e1f0f4" stroke-width="1" stroke-dasharray="1,1"/>
<path d="M124,324.8 L777,324.8" stroke="#e1f0f4" stroke-width="1" stroke-dasharray="1,1"/>
<path d="M124,365.9 L777,365.9" stroke="#e1f0f4" stroke-width="1" stroke-dasharray="1,1"/>
<path d="M124,406.9 L777,406.9" stroke="#e1f0f4" stroke-width="1" stroke-dasharray="1,1"/>
<path d="M124,447.9 L777,447.9" stroke="#e1f0f4" stroke-width="1" stroke-dasharray="1,1"/>
<path d="M124,489.0 L777,489.0" stroke="#e1f0f4" stroke-width="1" stroke-dasharray="1,1"/>
<path d="M155.9,79 L155.9,489" stroke="#e1f0f4" stroke-width="1" stroke-dasharray="1,1"/>
<path d="M221.4,79 L221.4,489" stroke="#e1f0f4" stroke-width="1" stroke-dasharray="1,1"/>
<path d="M286.9,79 L286.9,489" stroke="#e1f0f4" stroke-width="1" stroke-dasharray="1,1"/>
<path d="M352.4,79 L352.4,489" stroke="#e1f0f4" stroke-width="1" stroke-dasharray="1,1"/>
<path d="M417.9,79 L417.9,489" stroke="#e1f0f4" stroke-width="1" stroke-dasharray="1,1"/>
<path d="M483.5,79 L483.5,489" stroke="#e1f0f4" stroke-width="1" stroke-dasharray="1,1"/>
<path d="M549.0,79 L549.0,489" stroke="#e1f0f4" stroke-width="1" stroke-dasharray="1,1"/>
<path d="M614.5,79 L614.5,489" stroke="#e1f0f4" stroke-width="1" stroke-dasharray="1,1"/>
<path d="M680.0,79 L680.0,489" stroke="#e1f0f4" stroke-width="1" stroke-dasharray="1,1"/>
<path d="M745.5,79 L745.5,489" stroke="#e1f0f4" stroke-width="1" stroke-dasharray="1,1"/>
<path d="M123.5,231.4 L124.5,231.4 L125.5,231.4 L126.5,230.1 L127.5,233.6 L128.5,232.7 L129.5,231.4 L130.5,231.4 L131.5,229.7 L132.5,231.4 L133.5,231.4 L134.5,231.4 L135.5,231.4 L136.5,231.4 L137.5,231.4 L137.6,231.4 L137.6,276 L138.2,276 L140.8,274.2 L140.8,231.4 L140.8,231.4 L141.8,232.7 L142.8,230.1 L143.8,231.4 L144.8,231.4 L145.8,231.4 L146.8,231.4 L147.8,231.4 L148.8,231.4 L149.8,232.7 L150.8,232.3 L151.8,232.7 L152.8,233.1 L153.8,231.4 L154.8,231.4 L155.8,231.4 L156.8,233.6 L157.8,231.4 L158.8,231.4 L159.8,233.6 L160.8,231.4 L161.8,230.5 L162.8,231.4 L163.8,231.4 L164.8,231.4 L165.8,231.4 L166.8,231.4 L167.8,231.4 L168.8,231.4 L169.8,231.4 L170.8,231.4 L171.8,231.4 L172.8,231.4 L173.8,231.4 L174.8,231.4 L175.0,231.4 L175.0,275.5 L175.6,275.5 L179.0,273.7 L179.0,231.4 L179.0,231.4 L180.0,233.1 L181.0,231.4 L182.0,231.4 L183.0,230.5 L184.0,231.4 L185.0,231.4 L186.0,230.1 L187.0,231.4 L188.0,229.2 L189.0,231.4 L190.0,231.4 L191.0,231.4 L192.0,231.4 L193.0,231.4 L194.0,233.1 L195.0,231.4 L196.0,230.1 L197.0,231.4 L198.0,231.4 L199.0,231.4 L200.0,231.4 L201.0,231.4 L202.0,231.4 L203.0,231.4 L204.0,231.4 L205.0,229.7 L206.0,231.4 L207.0,231.4 L208.0,231.4 L209.0,231.4 L210.0,231.4 L211.0,231.4 L212.0,231.4 L213.0,233.1 L214.0,231.4 L214.4,231.4 L214.4,275.5 L215.0,275.5 L217.6,273.7 L217.6,231.4 L217.6,231.4 L218.6,231.4 L219.6,231.4 L220.6,231.4 L221.6,231.4 L222.6,231.4 L223.6,229.7 L224.6,231.4 L225.6,233.6 L226.6,231.4 L227.6,230.1 L228.6,233.1 L229.6,231.4 L230.6,231.4 L231.6,231.4 L232.6,231.4 L233.6,231.4 L234.6,231.4 L235.6,231.4 L236.6,231.4 L237.6,231.4 L238.6,231.4 L239.6,231.4 L240.6,230.1 L241.6,231.4 L242.6,231.4 L243.6,231.4 L244.6,231.4 L245.6,231.4 L246.6,231.4 L247.6,231.4 L248.6,231.4 L249.6,231.4 L250.6,231.4 L251.6,231.4 L252.4,231.4 L252.4,275.8 L253.0,275.8 L255.6,274.0 L255.6,231.4 L255.6,231.4 L256.6,231.4 L257.6,231.4 L258.6,231.4 L259.6,230.5 L260.6,231.4 L261.6,231.4 L262.6,231.4 L263.6,231.4 L264.6,231.4 L265.6,231.4 L266.6,231.4 L267.6,231.4 L268.6,232.3 L269.6,231.4 L270.6,232.3 L271.6,229.2 L272.6,231.4 L273.6,231.4 L274.6,231.4 L275.6,231.4 L276.6,231.4 L277.6,231.4 L278.6,231.4 L279.6,231.4 L280.6,231.4 L281.6,231.4 L282.6,231.4 L283.6,231.4 L284.6,231.4 L285.6,231.4 L286.6,231.4 L287.6,233.1 L288.6,231.4 L289.6,231.4 L290.1,231.4 L290.1,275 L290.7,275 L293.7,273.2 L293.7,231.4 L293.7,231.4 L294.7,231.4 L295.7,231.4 L296.7,231.4 L297.7,231.4 L298.7,231.4 L299.7,231.4 L300.7,232.7 L301.7,231.4 L302.7,229.7 L303.7,231.4 L304.7,231.4 L305.7,231.4 L306.7,231.4 L307.7,233.6 L308.7,231.4 L309.7,231.4 L310.7,231.4 L311.7,230.1 L312.7,231.4 L313.7,231.4 L314.7,232.3 L315.7,231.4 L316.7,231.4 L317.7,231.4 L318.7,231.4 L319.7,229.7 L320.7,231.4 L321.7,231.4 L322.7,231.4 L323.7,231.4 L324.7,231.4 L325.7,230.5 L326.7,229.2 L327.7,231.4 L328.3,231.4 L328.3,273.3 L328.9,273.3 L331.8,271.5 L331.8,231.4 L331.8,231.4 L332.8,231.4 L333.8,231.4 L334.8,229.7 L335.8,230.5 L336.8,231.4 L337.8,230.1 L338.8,231.4 L339.8,231.4 L340.8,231.4 L341.8,231.4 L342.8,231.4 L343.8,231.4 L344.8,233.6 L345.8,231.4 L346.8,232.7 L347.8,233.1 L348.8,229.2 L349.8,230.5 L350.8,231.4 L351.8,231.4 L352.8,231.4 L353.8,231.4 L354.8,231.4 L355.8,231.4 L356.8,231.4 L357.8,231.4 L358.8,231.4 L359.8,233.1 L360.8,231.4 L361.8,231.4 L362.8,231.4 L363.8,231.4 L364.8,231.4 L365.8,231.4 L366.3,231.4 L366.3,275 L366.9,275 L369.3,273.2 L369.3,231.4 L369.3,231.4 L370.3,231.4 L371.3,231.4 L372.3,231.4 L373.3,231.4 L374.3,231.4 L375.3,231.4 L376.3,231.4 L377.3,229.2 L378.3,231.4 L379.3,231.4 L380.3,231.4 L381.3,231.4 L382.3,231.4 L383.3,231.4 L384.3,231.4 L385.3,231.4 L386.3,231.4 L387.3,231.4 L388.3,231.4 L389.3,231.4 L390.3,231.4 L391.3,231.4 L392.3,231.4 L393.3,231.4 L394.3,231.4 L395.3,230.5 L396.3,231.4 L397.3,233.6 L398.3,231.4 L399.3,231.4 L400.3,231.4 L401.3,231.4 L402.3,231.4 L403.3,231.4 L404.0,231.4 L404.0,275 L404.6,275 L407.6,273.2 L407.6,231.4 L407.6,231.4 L408.6,232.3 L409.6,231.4 L410.6,231.4 L411.6,231.4 L412.6,231.4 L413.6,230.5 L414.6,233.6 L415.6,231.4 L416.6,231.4 L417.6,231.4 L418.6,233.6 L419.6,233.6 L420.6,231.4 L421.6,231.4 L422.6,231.4 L423.6,231.4 L424.6,231.4 L425.6,230.5 L426.6,231.4 L427.6,231.4 L428.6,231.4 L429.6,231.4 L430.6,231.4 L431.6,231.4 L432.6,233.1 L433.6,231.4 L434.6,231.4 L435.6,231.4 L436.6,231.4 L437.6,231.4 L438.6,231.4 L439.6,231.4 L440.6,231.4 L441.6,231.4 L442.0,231.4 L442.0,273 L442.6,273 L446.0,271.2 L446.0,231.4 L446.0,231.4 L447.0,231.4 L448.0,229.7 L449.0,233.1 L450.0,231.4 L451.0,231.4 L452.0,231.4 L453.0,230.5 L454.0,231.4 L455.0,232.7 L456.0,231.4 L457.0,231.4 L458.0,231.4 L459.0,231.4 L460.0,231.4 L461.0,231.4 L462.0,231.4 L463.0,231.4 L464.0,231.4 L465.0,231.4 L466.0,231.4 L467.0,231.4 L468.0,231.4 L469.0,231.4 L470.0,231.4 L471.0,231.4 L472.0,231.4 L473.0,230.5 L474.0,231.4 L475.0,231.4 L476.0,233.6 L477.0,231.4 L478.0,231.4 L479.0,231.4 L480.0,231.4 L480.1,231.4 L480.1,275.8 L480.7,275.8 L483.7,274.0 L483.7,231.4 L483.7,231.4 L484.7,231.4 L485.7,231.4 L486.7,230.5 L487.7,231.4 L488.7,229.7 L489.7,231.4 L490.7,231.4 L491.7,232.3 L492.7,229.7 L493.7,231.4 L494.7,231.4 L495.7,231.4 L496.7,229.2 L497.7,231.4 L498.7,231.4 L499.7,229.2 L500.7,231.4 L501.7,231.4 L502.7,231.4 L503.7,231.4 L504.7,231.4 L505.7,231.4 L506.7,231.4 L507.7,231.4 L508.7,231.4 L509.7,231.4 L510.7,231.4 L511.7,231.4 L512.7,231.4 L513.7,229.2 L514.7,230.5 L515.7,231.4 L516.7,231.4 L517.7,230.5 L518.5,231.4 L518.5,275 L519.1,275 L522.4,273.2 L522.4,231.4 L522.4,231.4 L523.4,231.4 L524.4,233.1 L525.4,231.4 L526.4,231.4 L527.4,231.4 L528.4,231.4 L529.4,231.4 L530.4,230.5 L531.4,231.4 L532.4,231.4 L533.4,231.4 L534.4,229.2 L535.4,232.7 L536.4,231.4 L537.4,231.4 L538.4,231.4 L539.4,230.5 L540.4,231.4 L541.4,231.4 L542.4,231.4 L543.4,231.4 L544.4,231.4 L545.4,231.4 L546.4,231.4 L547.4,229.2 L548.4,231.4 L549.4,231.4 L550.4,229.7 L551.4,231.4 L552.4,231.4 L553.4,231.4 L554.4,231.4 L555.4,231.4 L556.4,231.4 L556.6,231.4 L556.6,273 L557.2,273 L560.2,271.2 L560.2,231.4 L560.2,231.4 L561.2,231.4 L562.2,231.4 L563.2,230.1 L564.2,231.4 L565.2,231.4 L566.2,231.4 L567.2,231.4 L568.2,231.4 L569.2,231.4 L570.2,231.4 L571.2,231.4 L572.2,232.7 L573.2,231.4 L574.2,231.4 L575.2,231.4 L576.2,231.4 L577.2,231.4 L578.2,232.7 L579.2,231.4 L580.2,231.4 L581.2,231.4 L582.2,231.4 L583.2,231.4 L584.2,231.4 L585.2,231.4 L586.2,231.4 L587.2,231.4 L588.2,232.3 L589.2,231.4 L590.2,231.4 L591.2,231.4 L592.2,232.3 L593.2,232.7 L594.0,231.4 L594.0,275 L594.6,275 L597.6,273.2 L597.6,231.4 L597.6,231.4 L598.6,231.4 L599.6,231.4 L600.6,231.4 L601.6,231.4 L602.6,231.4 L603.6,229.2 L604.6,231.4 L605.6,229.7 L606.6,231.4 L607.6,232.7 L608.6,231.4 L609.6,231.4 L610.6,231.4 L611.6,231.4 L612.6,231.4 L613.6,231.4 L614.6,231.4 L615.6,232.7 L616.6,231.4 L617.6,231.4 L618.6,231.4 L619.6,233.1 L620.6,231.4 L621.6,232.7 L622.6,233.6 L623.6,231.4 L624.6,232.3 L625.6,231.4 L626.6,231.4 L627.6,231.4 L628.6,231.4 L629.6,231.4 L630.6,231.4 L631.6,231.4 L632.4,231.4 L632.4,275 L633.0,275 L636.0,273.2 L636.0,231.4 L636.0,231.4 L637.0,232.3 L638.0,231.4 L639.0,231.4 L640.0,231.4 L641.0,231.4 L642.0,231.4 L643.0,231.4 L644.0,231.4 L645.0,231.4 L646.0,231.4 L647.0,231.4 L648.0,231.4 L649.0,231.4 L650.0,231.4 L651.0,231.4 L652.0,230.5 L653.0,231.4 L654.0,231.4 L655.0,231.4 L656.0,231.4 L657.0,231.4 L658.0,231.4 L659.0,231.4 L660.0,233.6 L661.0,231.4 L662.0,231.4 L663.0,231.4 L664.0,231.4 L665.0,231.4 L666.0,231.4 L667.0,231.4 L668.0,231.4 L669.0,231.4 L669.6,231.4 L669.6,272.6 L670.2,272.6 L673.7,270.8 L673.7,231.4 L673.7,231.4 L674.7,231.4 L675.7,231.4 L676.7,231.4 L677.7,231.4 L678.7,231.4 L679.7,231.4 L680.7,233.6 L681.7,231.4 L682.7,231.4 L683.7,231.4 L684.7,231.4 L685.7,231.4 L686.7,231.4 L687.7,231.4 L688.7,231.4 L689.7,233.6 L690.7,231.4 L691.7,231.4 L692.7,230.5 L693.7,231.4 L694.7,231.4 L695.7,231.4 L696.7,231.4 L697.7,231.4 L698.7,231.4 L699.7,231.4 L700.7,231.4 L701.7,231.4 L702.7,231.4 L703.7,231.4 L704.7,231.4 L705.7,229.7 L706.7,231.4 L707.4,231.4 L707.4,275 L708.0,275 L711.0,273.2 L711.0,231.4 L711.0,231.4 L712.0,230.5 L713.0,231.4 L714.0,232.3 L715.0,231.4 L716.0,231.4 L717.0,229.2 L718.0,231.4 L719.0,231.4 L720.0,231.4 L721.0,229.7 L722.0,231.4 L723.0,231.4 L724.0,231.4 L725.0,231.4 L726.0,231.4 L727.0,231.4 L728.0,231.4 L729.0,231.4 L730.0,231.4 L731.0,231.4 L732.0,229.7 L733.0,231.4 L734.0,229.7 L735.0,229.2 L736.0,231.4 L737.0,233.1 L738.0,231.4 L739.0,231.4 L740.0,231.4 L741.0,231.4 L742.0,231.4 L743.0,231.4 L744.0,231.4 L744.5,231.4 L744.5,275 L745.1,275 L747.9,273.2 L747.9,231.4 L747.9,231.4 L748.9,232.7 L749.9,231.4 L750.9,231.4 L751.9,231.4 L752.9,231.4 L753.9,231.4 L754.9,231.4 L755.9,231.4 L756.9,231.4 L757.9,231.4 L758.9,232.7 L759.9,231.4 L760.9,231.4 L761.9,231.4 L762.9,231.4 L763.9,230.1 L764.9,231.4 L765.9,231.4 L766.9,231.4 L767.9,231.4 L768.9,230.5 L769.9,231.4 L770.9,231.4 L771.9,231.4 L772.9,229.7 L773.9,231.4 L774.9,231.4 L775.9,231.4 L776.9,231.4 L777.2,231.4" fill="none" stroke="#ee4a6a" stroke-width="0.85" stroke-opacity="0.75"/>
<path d=" M150.6,231.3 h2.5 v1.6 h-2.5 Z M157.3,231.3 h2.0 v1.6 h-2.0 Z M168.0,231.3 h2.0 v1.6 h-2.0 Z M181.6,231.3 h1.0 v1.6 h-1.0 Z M185.0,231.3 h1.0 v1.6 h-1.0 Z M199.2,231.3 h1.0 v1.6 h-1.0 Z M210.9,231.3 h2.5 v1.6 h-2.5 Z M230.6,231.3 h1.0 v1.6 h-1.0 Z M234.2,231.3 h1.5 v1.6 h-1.5 Z M246.0,231.3 h1.0 v1.6 h-1.0 Z M260.3,231.3 h3.0 v1.6 h-3.0 Z M272.2,231.3 h2.0 v1.6 h-2.0 Z M275.9,229.3 h1.0 v3.4 h-1.0 Z M320.8,231.3 h2.5 v1.6 h-2.5 Z M349.4,231.3 h2.5 v1.6 h-2.5 Z M354.2,231.3 h1.0 v1.6 h-1.0 Z M361.0,231.3 h1.5 v1.6 h-1.5 Z M386.0,231.3 h1.0 v1.6 h-1.0 Z M390.5,231.3 h3.0 v1.6 h-3.0 Z M460.0,231.3 h1.0 v1.6 h-1.0 Z M467.9,231.3 h1.5 v1.6 h-1.5 Z M474.3,229.3 h1.5 v3.4 h-1.5 Z M524.6,231.3 h1.0 v1.6 h-1.0 Z M648.5,229.3 h2.5 v3.4 h-2.5 Z M678.6,229.3 h1.5 v3.4 h-1.5 Z M724.6,231.3 h1.0 v1.6 h-1.0 Z M754.9,231.3 h2.0 v1.6 h-2.0 Z" fill="#ec1a48" fill-opacity="0.6"/>
<path d=" M142.1,231.4 L142.1,236.4 M180.3,231.4 L180.3,236.4 M218.9,231.4 L218.9,236.4 M256.9,231.4 L256.9,236.4 M295.0,231.4 L295.0,236.4 M333.1,231.4 L333.1,236.4 M370.6,231.4 L370.6,236.4 M408.9,231.4 L408.9,236.4 M447.3,231.4 L447.3,236.4 M485.0,231.4 L485.0,236.4 M523.7,231.4 L523.7,236.4 M561.5,231.4 L561.5,236.4 M598.9,231.4 L598.9,236.4 M637.3,231.4 L637.3,236.4 M675.0,231.4 L675.0,236.4 M712.3,231.4 L712.3,236.4 M749.2,231.4 L749.2,236.4" fill="none" stroke="#ee5470" stroke-width="0.9"/>
<path d=" M137.6,275.7 L139.2,274.8 M175.0,275.2 L176.6,274.3 M214.4,275.2 L216.0,274.3 M252.4,275.5 L254.0,274.6 M290.1,274.7 L291.7,273.8 M328.3,273.0 L329.9,272.1 M366.3,274.7 L367.9,273.8 M404.0,274.7 L405.6,273.8 M442.0,272.7 L443.6,271.8 M480.1,275.5 L481.7,274.6 M518.5,274.7 L520.1,273.8 M556.6,272.7 L558.2,271.8 M594.0,274.7 L595.6,273.8 M632.4,274.7 L634.0,273.8 M669.6,272.3 L671.2,271.4 M707.4,274.7 L709.0,273.8 M744.5,274.7 L746.1,273.8" fill="none" stroke="#e8103c" stroke-width="1.2"/>
<path d="M199.6,235 L199.6,220.5" stroke="#ee5470" stroke-width="1"/>
<path d="M123.5,284.2 L124.5,284.2 L125.5,283.0 L126.5,283.4 L127.5,284.2 L128.5,284.2 L129.5,284.2 L130.5,284.2 L131.5,284.2 L132.5,284.2 L133.5,284.2 L134.5,285.8 L135.5,284.2 L136.5,286.4 L137.5,284.2 L138.5,284.2 L139.5,284.2 L140.5,284.2 L141.5,284.2 L142.5,284.2 L143.5,284.2 L144.5,284.2 L145.5,283.0 L146.5,284.2 L147.5,283.0 L148.5,284.2 L149.5,284.2 L150.5,285.4 L151.5,284.2 L152.5,284.2 L153.5,283.0 L154.5,286.4 L155.5,284.2 L156.5,284.2 L157.5,284.2 L158.5,283.4 L159.5,282.0 L160.5,284.2 L161.5,283.0 L162.5,284.2 L163.5,284.2 L164.5,286.4 L165.5,283.0 L166.5,284.2 L167.5,283.0 L168.5,284.2 L169.5,284.2 L170.5,284.2 L171.5,284.2 L172.3,284.2 L172.3,242.8 L180.8,242.8 L180.8,284.2 L180.8,284.2 L181.8,284.2 L182.8,284.2 L183.8,282.6 L184.8,284.2 L185.8,283.4 L186.8,283.4 L187.8,284.2 L188.8,284.2 L189.8,284.2 L190.8,284.2 L191.8,284.2 L192.8,284.2 L193.8,285.0 L194.8,284.2 L195.8,284.2 L196.8,284.2 L197.8,284.2 L198.8,284.2 L199.8,284.2 L200.8,284.2 L201.8,284.2 L202.8,284.2 L203.8,283.0 L204.8,284.2 L205.8,284.2 L206.8,284.2 L207.8,284.2 L208.8,284.2 L209.8,285.8 L210.8,284.2 L211.8,284.2 L212.8,284.2 L213.8,284.2 L214.8,284.2 L215.8,284.2 L216.8,284.2 L217.8,284.2 L218.8,284.2 L219.8,284.2 L220.8,284.2 L221.8,284.2 L222.8,284.2 L223.8,284.2 L224.8,284.2 L225.8,284.2 L226.8,284.2 L227.8,284.2 L228.8,284.2 L229.8,284.2 L230.8,284.2 L231.8,285.4 L232.8,284.2 L233.8,284.2 L234.8,284.2 L235.8,284.2 L236.8,284.2 L237.8,284.2 L238.8,284.2 L239.8,283.0 L240.8,284.2 L241.8,284.2 L242.8,284.2 L243.8,286.4 L244.8,284.2 L245.8,284.2 L246.8,284.2 L247.8,284.2 L248.8,284.2 L249.8,284.2 L250.8,284.2 L251.8,284.2 L252.8,284.2 L253.8,284.2 L254.8,284.2 L255.8,284.2 L256.8,285.0 L257.8,284.2 L258.8,284.2 L259.8,284.2 L260.8,284.2 L261.8,284.2 L262.8,284.2 L263.8,284.2 L264.8,284.2 L265.8,284.2 L266.8,284.2 L267.8,282.0 L268.8,284.2 L269.8,284.2 L270.8,284.2 L271.8,284.2 L272.8,284.2 L273.8,284.2 L274.8,284.2 L275.8,284.2 L276.8,282.0 L277.8,284.2 L278.8,284.2 L279.8,284.2 L280.8,284.2 L281.8,284.2 L282.8,284.2 L283.8,284.2 L284.8,284.2 L285.8,283.4 L286.8,284.2 L287.4,284.2 L287.4,242.8 L295.2,242.8 L295.2,284.2 L295.2,284.2 L296.2,284.2 L297.2,282.0 L298.2,284.2 L299.2,285.8 L300.2,284.2 L301.2,284.2 L302.2,283.4 L303.2,283.0 L304.2,284.2 L305.2,284.2 L306.2,282.0 L307.2,282.0 L308.2,284.2 L309.2,284.2 L310.2,284.2 L311.2,285.4 L312.2,284.2 L313.2,284.2 L314.2,285.0 L315.2,284.2 L316.2,283.4 L317.2,284.2 L318.2,284.2 L319.2,284.2 L320.2,284.2 L321.2,283.0 L322.2,285.8 L323.2,284.2 L324.2,284.2 L325.2,284.2 L326.2,283.4 L327.2,284.2 L328.2,284.2 L329.2,284.2 L330.2,284.2 L331.2,284.2 L332.2,284.2 L333.2,284.2 L334.2,284.2 L335.2,284.2 L336.2,285.4 L337.2,284.2 L338.2,284.2 L339.2,282.0 L340.2,284.2 L341.2,285.0 L342.2,284.2 L343.2,284.2 L344.2,286.4 L345.2,283.0 L346.2,284.2 L347.2,284.2 L348.2,284.2 L349.2,284.2 L350.2,282.6 L351.2,284.2 L352.2,284.2 L353.2,285.8 L354.2,284.2 L355.2,284.2 L356.2,284.2 L357.2,286.4 L358.2,282.6 L359.2,284.2 L360.2,284.2 L361.2,284.2 L362.2,283.0 L363.2,284.2 L364.2,284.2 L365.2,282.6 L366.2,284.2 L367.2,283.4 L368.2,284.2 L369.2,284.2 L370.2,283.0 L371.2,283.4 L372.2,282.0 L373.2,284.2 L374.2,284.2 L375.2,283.0 L376.2,284.2 L377.2,282.6 L378.2,284.2 L379.2,284.2 L380.2,284.2 L381.2,284.2 L382.2,283.0 L383.2,284.2 L384.2,284.2 L385.2,284.2 L386.2,282.6 L387.2,284.2 L388.2,284.2 L389.2,285.0 L390.2,284.2 L391.2,284.2 L392.2,284.2 L393.2,284.2 L394.2,282.6 L395.2,284.2 L396.2,282.6 L397.2,284.2 L398.2,282.6 L399.2,285.0 L400.2,283.0 L401.0,284.2 L401,242.8 L409.4,242.8 L409.4,284.2 L409.4,284.2 L410.4,282.0 L411.4,284.2 L412.4,284.2 L413.4,285.4 L414.4,283.0 L415.4,284.2 L416.4,284.2 L417.4,284.2 L418.4,284.2 L419.4,284.2 L420.4,284.2 L421.4,282.6 L422.4,284.2 L423.4,284.2 L424.4,284.2 L425.4,284.2 L426.4,284.2 L427.4,284.2 L428.4,283.0 L429.4,282.6 L430.4,285.8 L431.4,286.4 L432.4,284.2 L433.4,284.2 L434.4,284.2 L435.4,284.2 L436.4,283.4 L437.4,284.2 L438.4,284.2 L439.4,284.2 L440.4,284.2 L441.4,284.2 L442.4,284.2 L443.4,284.2 L444.4,284.2 L445.4,284.2 L446.4,284.2 L447.4,282.6 L448.4,282.6 L449.4,284.2 L450.4,284.2 L451.4,283.4 L452.4,285.4 L453.4,283.4 L454.4,284.2 L455.4,283.4 L456.4,284.2 L457.4,284.2 L458.4,284.2 L459.4,284.2 L460.4,284.2 L461.4,284.2 L462.4,284.2 L463.4,284.2 L464.4,285.4 L465.4,284.2 L466.4,285.8 L467.4,284.2 L468.4,284.2 L469.4,284.2 L470.4,284.2 L471.4,284.2 L472.4,283.4 L473.4,284.2 L474.4,284.2 L475.4,284.2 L476.4,285.8 L477.4,284.2 L478.4,284.2 L479.4,282.6 L480.4,284.2 L481.4,283.0 L482.4,284.2 L483.4,286.4 L484.4,284.2 L485.4,284.2 L486.4,284.2 L487.4,284.2 L488.4,284.2 L489.4,283.4 L490.4,283.4 L491.4,284.2 L492.4,284.2 L493.4,284.2 L494.4,285.8 L495.4,283.0 L496.4,285.0 L497.4,282.0 L498.4,282.6 L499.4,284.2 L500.4,283.0 L501.4,284.2 L502.4,284.2 L503.4,284.2 L504.4,284.2 L505.4,284.2 L506.4,284.2 L507.4,284.2 L508.4,284.2 L509.4,284.2 L510.4,284.2 L511.4,284.2 L512.4,284.2 L513.4,284.2 L514.4,284.2 L515.4,284.2 L515.4,242.8 L523.9,242.8 L523.9,284.2 L523.9,284.2 L524.9,284.2 L525.9,282.6 L526.9,284.2 L527.9,285.8 L528.9,284.2 L529.9,284.2 L530.9,285.8 L531.9,284.2 L532.9,282.6 L533.9,284.2 L534.9,284.2 L535.9,284.2 L536.9,283.4 L537.9,284.2 L538.9,284.2 L539.9,284.2 L540.9,284.2 L541.9,284.2 L542.9,284.2 L543.9,285.4 L544.9,284.2 L545.9,285.0 L546.9,284.2 L547.9,284.2 L548.9,283.4 L549.9,284.2 L550.9,284.2 L551.9,284.2 L552.9,284.2 L553.9,283.0 L554.9,284.2 L555.9,284.2 L556.9,284.2 L557.9,282.6 L558.9,284.2 L559.9,284.2 L560.9,284.2 L561.9,284.2 L562.9,284.2 L563.9,284.2 L564.9,284.2 L565.9,284.2 L566.9,283.4 L567.9,284.2 L568.9,284.2 L569.9,284.2 L570.9,285.0 L571.9,284.2 L572.9,285.8 L573.9,284.2 L574.9,285.0 L575.9,284.2 L576.9,284.2 L577.9,284.2 L578.9,284.2 L579.9,284.2 L580.9,284.2 L581.9,284.2 L582.9,283.4 L583.9,282.0 L584.9,282.0 L585.9,284.2 L586.9,284.2 L587.9,284.2 L588.9,285.0 L589.9,284.2 L590.9,284.2 L591.9,284.2 L592.9,284.2 L593.9,284.2 L594.9,285.8 L595.9,285.0 L596.9,284.2 L597.9,284.2 L598.9,284.2 L599.9,284.2 L600.9,284.2 L601.9,284.2 L602.9,284.2 L603.9,284.2 L604.9,286.4 L605.9,284.2 L606.9,284.2 L607.9,284.2 L608.9,284.2 L609.9,284.2 L610.9,282.6 L611.9,284.2 L612.9,284.2 L613.9,284.2 L614.9,283.0 L615.9,284.2 L616.9,284.2 L617.9,282.6 L618.9,283.0 L619.9,284.2 L620.9,284.2 L621.9,284.2 L622.9,284.2 L623.9,284.2 L624.9,284.2 L625.9,283.4 L626.9,284.2 L627.9,284.2 L628.9,284.2 L629.3,284.2 L629.3,242.8 L637.4,242.8 L637.4,284.2 L637.4,284.2 L638.4,284.2 L639.4,284.2 L640.4,284.2 L641.4,284.2 L642.4,284.2 L643.4,284.2 L644.4,284.2 L645.4,284.2 L646.4,284.2 L647.4,285.4 L648.4,284.2 L649.4,284.2 L650.4,284.2 L651.4,284.2 L652.4,283.4 L653.4,284.2 L654.4,282.0 L655.4,284.2 L656.4,284.2 L657.4,284.2 L658.4,285.4 L659.4,284.2 L660.4,284.2 L661.4,284.2 L662.4,284.2 L663.4,284.2 L664.4,284.2 L665.4,284.2 L666.4,285.8 L667.4,286.4 L668.4,284.2 L669.4,284.2 L670.4,284.2 L671.4,284.2 L672.4,284.2 L673.4,284.2 L674.4,284.2 L675.4,285.0 L676.4,284.2 L677.4,284.2 L678.4,282.0 L679.4,284.2 L680.4,284.2 L681.4,284.2 L682.4,284.2 L683.4,285.0 L684.4,284.2 L685.4,284.2 L686.4,284.2 L687.4,284.2 L688.4,283.0 L689.4,285.4 L690.4,284.2 L691.4,284.2 L692.4,284.2 L693.4,284.2 L694.4,284.2 L695.4,285.4 L696.4,284.2 L697.4,283.4 L698.4,284.2 L699.4,284.2 L700.4,284.2 L701.4,284.2 L702.4,284.2 L703.4,284.2 L704.4,284.2 L705.4,285.0 L706.4,284.2 L707.4,286.4 L708.4,284.2 L709.4,284.2 L710.4,284.2 L711.4,282.0 L712.4,284.2 L713.4,284.2 L714.4,284.2 L715.4,283.4 L716.4,284.2 L717.4,284.2 L718.4,284.2 L719.4,286.4 L720.4,284.2 L721.4,284.2 L722.4,284.2 L723.4,282.6 L724.4,284.2 L725.4,284.2 L726.4,284.2 L727.4,284.2 L728.4,284.2 L729.4,284.2 L730.4,284.2 L731.4,285.4 L732.4,284.2 L733.4,284.2 L734.4,282.0 L735.4,283.0 L736.4,284.2 L737.4,284.2 L738.4,283.0 L739.4,285.8 L740.4,284.2 L741.4,284.2 L742.4,282.6 L742.5,284.2 L742.5,242.8 L750.3,242.8 L750.3,284.2 L750.3,284.2 L751.3,284.2 L752.3,284.2 L753.3,284.2 L754.3,285.0 L755.3,285.8 L756.3,284.2 L757.3,285.8 L758.3,284.2 L759.3,283.0 L760.3,284.2 L761.3,284.2 L762.3,284.2 L763.3,283.0 L764.3,284.2 L765.3,282.0 L766.3,283.0 L767.3,284.2 L768.3,284.2 L769.3,284.2 L770.3,284.2 L771.3,284.2 L772.3,284.2 L773.3,282.6 L774.3,284.2 L775.3,284.2 L776.3,284.2 L777.2,284.2" fill="none" stroke="#2f6cb2" stroke-width="0.85" stroke-opacity="0.85"/>
<path d=" M140.9,282.8 h2.5 v1.6 h-2.5 Z M153.5,282.8 h1.0 v1.6 h-1.0 Z M159.3,282.8 h1.0 v1.6 h-1.0 Z M165.3,282.8 h3.0 v1.6 h-3.0 Z M170.4,282.8 h1.0 v1.6 h-1.0 Z M201.4,282.8 h1.0 v1.6 h-1.0 Z M259.8,281.0 h1.0 v3.0 h-1.0 Z M275.4,281.0 h2.5 v3.0 h-2.5 Z M282.9,281.0 h2.0 v3.0 h-2.0 Z M300.6,282.8 h1.0 v1.6 h-1.0 Z M337.4,282.8 h1.0 v1.6 h-1.0 Z M349.4,281.0 h1.0 v3.0 h-1.0 Z M355.6,282.8 h2.5 v1.6 h-2.5 Z M360.1,282.8 h1.0 v1.6 h-1.0 Z M365.7,282.8 h2.0 v1.6 h-2.0 Z M392.0,282.8 h2.0 v1.6 h-2.0 Z M414.8,282.8 h1.0 v1.6 h-1.0 Z M435.4,282.8 h2.5 v1.6 h-2.5 Z M447.8,282.8 h1.0 v1.6 h-1.0 Z M465.5,282.8 h3.0 v1.6 h-3.0 Z M479.4,282.8 h2.5 v1.6 h-2.5 Z M487.8,282.8 h1.0 v1.6 h-1.0 Z M505.5,282.8 h1.5 v1.6 h-1.5 Z M553.7,281.0 h1.5 v3.0 h-1.5 Z M559.5,282.8 h2.5 v1.6 h-2.5 Z M562.5,282.8 h1.0 v1.6 h-1.0 Z M596.9,282.8 h3.0 v1.6 h-3.0 Z M609.4,281.0 h1.0 v3.0 h-1.0 Z M640.1,281.0 h1.0 v3.0 h-1.0 Z M680.1,282.8 h3.0 v1.6 h-3.0 Z M689.0,282.8 h2.0 v1.6 h-2.0 Z M708.0,281.0 h2.0 v3.0 h-2.0 Z M726.4,281.0 h1.5 v3.0 h-1.5 Z M761.9,282.8 h2.0 v1.6 h-2.0 Z" fill="#1f62ab" fill-opacity="0.85"/>
<path d=" M173.3,242.8 L176.3,243.60000000000002 L179.8,242.8 M288.4,242.8 L291.4,243.60000000000002 L294.2,242.8 M402.0,242.8 L405.0,243.60000000000002 L408.4,242.8 M516.4,242.8 L519.4,243.60000000000002 L522.9,242.8 M630.3,242.8 L633.3,243.60000000000002 L636.4,242.8 M743.5,242.8 L746.5,243.60000000000002 L749.3,242.8" fill="none" stroke="#1f5fa8" stroke-width="0.9"/>
<path d="M142.4,293.6 L142.4,280" stroke="#3f78b8" stroke-width="1"/>
<path d="M371.7,300.4 L371.7,281" stroke="#3f78b8" stroke-width="1"/>
<path d="M199.6,286 L199.6,273.4" stroke="#3f78b8" stroke-width="1"/>
<path d="M258,289 L258,280" stroke="#3f78b8" stroke-width="1"/>
<path d="M413,289 L413,281" stroke="#3f78b8" stroke-width="1"/>
<path d="M287.4,259.7 L290.7,263 L287.4,266.3 L284.1,263 Z" fill="#f6ee00" stroke="#c8c040" stroke-width="0.35"/>
<rect x="103.7" y="74.5" width="20.3" height="7.8" rx="1.2" fill="#fff" stroke="#a9c9e8" stroke-width="0.9"/>
<path d="M124,74 L128.3,78.3 L124,82.6 Z" fill="#1c5b99"/>
<rect x="778" y="74.5" width="19.5" height="7.9" fill="#fff" stroke="#f5b0bf" stroke-width="0.9"/>
<path d="M778,74 L772.8,78.4 L778,83 Z" fill="#e8103a"/>
<rect x="112.5" y="489.6" width="21.8" height="12" rx="1.5" fill="#fff" stroke="#a8c6e6" stroke-width="0.8"/>
<path d="M119.8,489.5 L123.8,485 L127.8,489.5 Z" fill="#1c5b99"/>
<circle cx="758.2" cy="92" r="4.2" fill="#fff" stroke="#1a5a9a" stroke-width="2"/><circle cx="758.2" cy="92" r="1.3" fill="#1a5a9a" opacity="0.8"/><path d="M761.4,95.2 L766.3,100.1" stroke="#1a5a9a" stroke-width="2.8" stroke-linecap="round"/>
</svg>
<div class="t" style="right:676.7px;top:73.95px;font-size:8.3px;line-height:8.3px;color:#2a6cb0;font-weight:normal;transform:scaleX(0.82);transform-origin:right center;">20.0</div>
<div class="t" style="left:778.6px;top:73.95px;font-size:8.3px;line-height:8.3px;color:#e8173c;font-weight:normal;transform:scaleX(0.82);transform-origin:left center;">20.0</div>
<div class="t" style="right:676.7px;top:115.20px;font-size:8.3px;line-height:8.3px;color:#2a6cb0;font-weight:normal;transform:scaleX(0.82);transform-origin:right center;">16.0</div>
<div class="t" style="left:778.6px;top:115.20px;font-size:8.3px;line-height:8.3px;color:#e8173c;font-weight:normal;transform:scaleX(0.82);transform-origin:left center;">16.0</div>
<div class="t" style="right:676.7px;top:156.25px;font-size:8.3px;line-height:8.3px;color:#2a6cb0;font-weight:normal;transform:scaleX(0.82);transform-origin:right center;">12.0</div>
<div class="t" style="left:778.6px;top:156.25px;font-size:8.3px;line-height:8.3px;color:#e8173c;font-weight:normal;transform:scaleX(0.82);transform-origin:left center;">12.0</div>
<div class="t" style="right:676.7px;top:197.30px;font-size:8.3px;line-height:8.3px;color:#2a6cb0;font-weight:normal;transform:scaleX(0.82);transform-origin:right center;">8.0</div>
<div class="t" style="left:778.6px;top:197.30px;font-size:8.3px;line-height:8.3px;color:#e8173c;font-weight:normal;transform:scaleX(0.82);transform-origin:left center;">8.0</div>
<div class="t" style="right:676.7px;top:238.35px;font-size:8.3px;line-height:8.3px;color:#2a6cb0;font-weight:normal;transform:scaleX(0.82);transform-origin:right center;">4.0</div>
<div class="t" style="left:778.6px;top:238.35px;font-size:8.3px;line-height:8.3px;color:#e8173c;font-weight:normal;transform:scaleX(0.82);transform-origin:left center;">4.0</div>
<div class="t" style="right:676.7px;top:279.40px;font-size:8.3px;line-height:8.3px;color:#2a6cb0;font-weight:normal;transform:scaleX(0.82);transform-origin:right center;">0.0</div>
<div class="t" style="left:778.6px;top:279.40px;font-size:8.3px;line-height:8.3px;color:#e8173c;font-weight:normal;transform:scaleX(0.82);transform-origin:left center;">0.0</div>
<div class="t" style="right:676.7px;top:320.45px;font-size:8.3px;line-height:8.3px;color:#2a6cb0;font-weight:normal;transform:scaleX(0.82);transform-origin:right center;">-4.0</div>
<div class="t" style="left:778.6px;top:320.45px;font-size:8.3px;line-height:8.3px;color:#e8173c;font-weight:normal;transform:scaleX(0.82);transform-origin:left center;">-4.0</div>
<div class="t" style="right:676.7px;top:361.50px;font-size:8.3px;line-height:8.3px;color:#2a6cb0;font-weight:normal;transform:scaleX(0.82);transform-origin:right center;">-8.0</div>
<div class="t" style="left:778.6px;top:361.50px;font-size:8.3px;line-height:8.3px;color:#e8173c;font-weight:normal;transform:scaleX(0.82);transform-origin:left center;">-8.0</div>
<div class="t" style="right:676.7px;top:402.55px;font-size:8.3px;line-height:8.3px;color:#2a6cb0;font-weight:normal;transform:scaleX(0.82);transform-origin:right center;">-12.0</div>
<div class="t" style="left:778.6px;top:402.55px;font-size:8.3px;line-height:8.3px;color:#e8173c;font-weight:normal;transform:scaleX(0.82);transform-origin:left center;">-12.0</div>
<div class="t" style="right:676.7px;top:443.60px;font-size:8.3px;line-height:8.3px;color:#2a6cb0;font-weight:normal;transform:scaleX(0.82);transform-origin:right center;">-16.0</div>
<div class="t" style="left:778.6px;top:443.60px;font-size:8.3px;line-height:8.3px;color:#e8173c;font-weight:normal;transform:scaleX(0.82);transform-origin:left center;">-16.0</div>
<div class="t" style="right:676.7px;top:484.65px;font-size:8.3px;line-height:8.3px;color:#2a6cb0;font-weight:normal;transform:scaleX(0.82);transform-origin:right center;">-20.0</div>
<div class="t" style="left:778.6px;top:484.65px;font-size:8.3px;line-height:8.3px;color:#e8173c;font-weight:normal;transform:scaleX(0.82);transform-origin:left center;">-20.0</div>
<div class="t" style="right:676.7px;top:82.98px;font-size:6.8px;line-height:6.8px;color:#2a6cb0;font-weight:normal;">V</div>
<div class="t" style="left:778.4px;top:82.98px;font-size:6.8px;line-height:6.8px;color:#e8173c;font-weight:normal;">V</div>
<div class="t" style="left:147.6px;top:491.44px;font-size:7.7px;line-height:7.7px;color:#2a2a2a;font-weight:normal;transform:scaleX(0.95);transform-origin:left center;">-40.0ms</div>
<div class="t" style="left:121.38px;width:200px;text-align:center;top:491.44px;font-size:7.7px;line-height:7.7px;color:#2a2a2a;font-weight:normal;transform:scaleX(0.95);transform-origin:center center;">-20.0</div>
<div class="t" style="left:186.89999999999998px;width:200px;text-align:center;top:491.44px;font-size:7.7px;line-height:7.7px;color:#2a2a2a;font-weight:normal;transform:scaleX(0.95);transform-origin:center center;">0.0</div>
<div class="t" style="left:252.41999999999996px;width:200px;text-align:center;top:491.44px;font-size:7.7px;line-height:7.7px;color:#2a2a2a;font-weight:normal;transform:scaleX(0.95);transform-origin:center center;">20.0</div>
<div class="t" style="left:317.94000000000005px;width:200px;text-align:center;top:491.44px;font-size:7.7px;line-height:7.7px;color:#2a2a2a;font-weight:normal;transform:scaleX(0.95);transform-origin:center center;">40.0</div>
<div class="t" style="left:383.46000000000004px;width:200px;text-align:center;top:491.44px;font-size:7.7px;line-height:7.7px;color:#2a2a2a;font-weight:normal;transform:scaleX(0.95);transform-origin:center center;">60.0</div>
<div class="t" style="left:448.98px;width:200px;text-align:center;top:491.44px;font-size:7.7px;line-height:7.7px;color:#2a2a2a;font-weight:normal;transform:scaleX(0.95);transform-origin:center center;">80.0</div>
<div class="t" style="left:514.5px;width:200px;text-align:center;top:491.44px;font-size:7.7px;line-height:7.7px;color:#2a2a2a;font-weight:normal;transform:scaleX(0.95);transform-origin:center center;">100.0</div>
<div class="t" style="left:580.0200000000001px;width:200px;text-align:center;top:491.44px;font-size:7.7px;line-height:7.7px;color:#2a2a2a;font-weight:normal;transform:scaleX(0.95);transform-origin:center center;">120.0</div>
<div class="t" style="left:645.5400000000001px;width:200px;text-align:center;top:491.44px;font-size:7.7px;line-height:7.7px;color:#2a2a2a;font-weight:normal;transform:scaleX(0.95);transform-origin:center center;">140.0</div>
<div class="a" style="left:798px;top:72px;width:2px;height:428px;background:#efefef"></div>
<svg class="a" style="left:0;top:492px" width="8" height="8" viewBox="0 492 8 8"><path d="M0,493 Q0.5,498.3 6,499 L6,500 L0,500 Z" fill="#0d2c52"/></svg>
<svg class="a" style="left:792px;top:492px" width="8" height="8" viewBox="792 492 8 8"><path d="M800,494 Q799.5,498.3 795,499.5 L795,500 L800,500 Z" fill="#1d2a58"/></svg>
</body></html>
